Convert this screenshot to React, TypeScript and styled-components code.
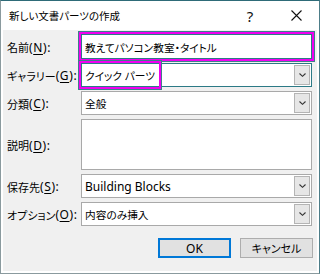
import React from "react";
import styled, { createGlobalStyle } from "styled-components";

const Global = createGlobalStyle`
  html, body { margin: 0; padding: 0; background: #ffffff; }
  body {
    font-family: "Noto Sans", "Noto Sans CJK JP", sans-serif;
    font-feature-settings: "palt";
    color: #000;
  }
  * { box-sizing: border-box; }
`;

const Window = styled.div`
  width: 320px;
  height: 274px;
  border: 1px solid #8a9a9e;
  border-top-color: #2e6b78;
  border-right-color: #4d7d88;
  background: #ffffff;
  display: flex;
  flex-direction: column;
`;

const TitleBar = styled.div`
  height: 29px;
  display: flex;
  align-items: center;
  padding-left: 8px;
  flex: none;
`;

const Title = styled.div`
  flex: 1;
  font-size: 10.5px;
  line-height: 1;
  padding-top: 1px;
`;

const TitleButton = styled.div`
  width: 46px;
  height: 29px;
  display: flex;
  align-items: center;
  justify-content: center;
  font-family: "Noto Sans", sans-serif;
  font-size: 15px;
  color: #111;
`;

const Body = styled.div`
  flex: 1;
  margin: 0 2px 2px 2px;
  background: #f0f0f0;
  padding: 4px 4px 0 4px;
  display: flex;
  flex-direction: column;
`;

const Form = styled.div`
  display: grid;
  grid-template-columns: 74px 231px;
  grid-template-rows: 25px 24px 24px 51px 24px 24px;
  row-gap: 4px;
`;

const Label = styled.div`
  display: flex;
  align-items: center;
  font-size: 11px;
  white-space: nowrap;
  padding-top: 1px;
`;

const Mnemonic = styled.span`
  font-size: 12px;
  letter-spacing: 0.6px;
`;

const Key = styled.span`
  text-decoration: underline;
  text-underline-offset: 2px;
`;

const Field = styled.div<{ $focus?: boolean }>`
  position: relative;
  display: flex;
  align-items: center;
  background: #ffffff;
  border: 1px solid ${(p) => (p.$focus ? "#2c7a86" : "#a9a9a9")};
  font-size: 11px;
  padding-left: 3px;
  white-space: nowrap;
`;

const Highlight = styled.div`
  position: absolute;
  left: -3px;
  top: -3px;
  bottom: -3px;
  border: 2px solid #f000f0;
  box-shadow: 0 0 0 1px #3d7f8a;
  pointer-events: none;
`;

const Value = styled.span<{ $latin?: boolean }>`
  flex: 1;
  padding-top: 1px;
  font-size: ${(p) => (p.$latin ? "12px" : "10.7px")};
`;

const DropButton = styled.div`
  width: 16px;
  align-self: stretch;
  margin: 1px;
  border: 1px solid #b4b4b4;
  background: #e6e6e6;
  display: flex;
  align-items: center;
  justify-content: center;
`;

const Area = styled.div`
  background: #ffffff;
  border: 1px solid #a9a9a9;
`;

const Buttons = styled.div`
  display: flex;
  justify-content: flex-end;
  gap: 9px;
  margin-top: 12px;
`;

const Button = styled.div<{ $default?: boolean }>`
  width: 73px;
  height: 20px;
  display: flex;
  align-items: center;
  justify-content: center;
  font-size: 11px;
  background: #e1e1e1;
  border: 1px solid ${(p) => (p.$default ? "#0078d7" : "#adadad")};
  box-shadow: ${(p) => (p.$default ? "inset 0 0 0 1px #0078d7" : "none")};
`;

const OkText = styled.span`
  font-size: 12px;
`;

const NameField = styled(Field)`
  outline: 2px solid #f000f0;
  outline-offset: 0px;
  box-shadow: 0 0 0 3px #3d7f8a;
`;

const Chevron = () => (
  <svg width="9" height="6" viewBox="0 0 9 6">
    <path d="M1.5 1.5 L4.5 4.3 L7.5 1.5" fill="none" stroke="#333" strokeWidth="1.1" />
  </svg>
);

const Combo = ({
  value,
  focus,
  hl,
  latin,
}: {
  value: string;
  focus?: boolean;
  hl?: number;
  latin?: boolean;
}) => (
  <Field $focus={focus}>
    {hl ? <Highlight style={{ width: hl }} /> : null}
    <Value $latin={latin}>{value}</Value>
    <DropButton>
      <Chevron />
    </DropButton>
  </Field>
);

const FormLabel = ({ text, k }: { text: string; k: string }) => (
  <Label>
    {text}
    <Mnemonic>
      (<Key>{k}</Key>):
    </Mnemonic>
  </Label>
);

export default function App() {
  return (
    <>
      <Global />
      <Window>
        <TitleBar>
          <Title>新しい文書パーツの作成</Title>
          <TitleButton>?</TitleButton>
          <TitleButton>
            <svg width="11" height="11" viewBox="0 0 11 11">
              <path d="M0.5 0.5 L10.5 10.5 M10.5 0.5 L0.5 10.5" stroke="#111" strokeWidth="1.1" />
            </svg>
          </TitleButton>
        </TitleBar>
        <Body>
          <Form>
            <FormLabel text="名前" k="N" />
            <NameField $focus>
              <Value>教えてパソコン教室・タイトル</Value>
            </NameField>

            <FormLabel text="ギャラリー" k="G" />
            <Combo value="クイック パーツ" focus hl={82} />

            <FormLabel text="分類" k="C" />
            <Combo value="全般" />

            <FormLabel text="説明" k="D" />
            <Area />

            <FormLabel text="保存先" k="S" />
            <Combo value="Building Blocks" latin />

            <FormLabel text="オプション" k="O" />
            <Combo value="内容のみ挿入" />
          </Form>
          <Buttons>
            <Button $default>
              <OkText>OK</OkText>
            </Button>
            <Button>キャンセル</Button>
          </Buttons>
        </Body>
      </Window>
    </>
  );
}
